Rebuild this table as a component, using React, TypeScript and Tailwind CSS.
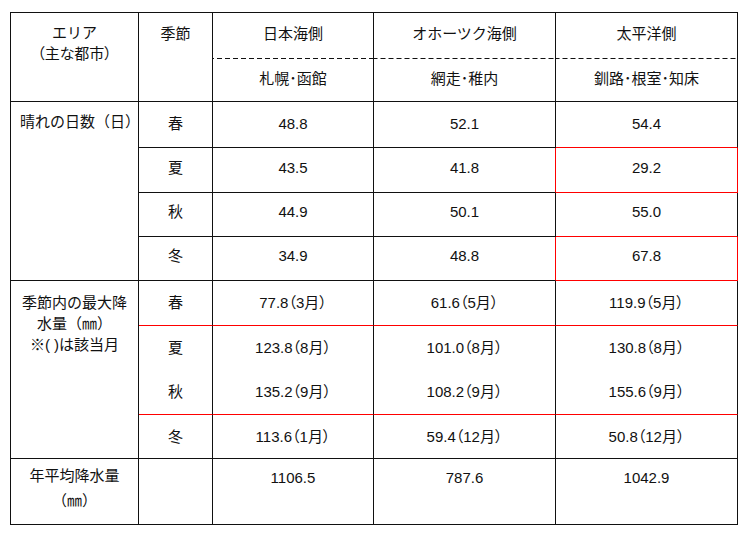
import React from "react";

type Edge = "k" | "red" | "none" | "dash";

// dashed rule under the region names (5px dash, 3px gap)
const dash =
  "bg-[linear-gradient(to_right,#111_5px,transparent_5px)] bg-[length:8px_1px] bg-repeat-x bg-bottom";

function Cell({
  children,
  r = "k",
  b = "k",
  className = "",
}: {
  children?: React.ReactNode;
  r?: Edge;
  b?: Edge;
  className?: string;
}) {
  const right = r === "red" ? "border-r border-r-[#f00]" : "border-r border-r-[#111]";
  const bottom =
    b === "red" ? "border-b border-b-[#f00]" : b === "k" ? "border-b border-b-[#111]" : b === "dash" ? dash : "";
  return <div className={`${right} ${bottom} text-center ${className}`}>{children}</div>;
}

const mid = "flex items-center justify-center";

const sunny = [
  { season: "春", v: ["48.8", "52.1", "54.4"], pad: "pb-[2px]" },
  { season: "夏", v: ["43.5", "41.8", "29.2"], pad: "pb-[4px]" },
  { season: "秋", v: ["44.9", "50.1", "55.0"], pad: "pb-[5px]" },
  { season: "冬", v: ["34.9", "48.8", "67.8"], pad: "pb-[5px]" },
];

const rain: { season: string; v: string[]; b: Edge }[] = [
  { season: "春", v: ["77.8（3月）", "61.6（5月）", "119.9（5月）"], b: "red" },
  { season: "夏", v: ["123.8（8月）", "101.0（8月）", "130.8（8月）"], b: "none" },
  { season: "秋", v: ["135.2（9月）", "108.2（9月）", "155.6（9月）"], b: "red" },
  { season: "冬", v: ["113.6（1月）", "59.4（12月）", "50.8（12月）"], b: "k" },
];

export default function App() {
  return (
    <div className="min-h-screen bg-white pt-[12px] pl-[10px] font-['Liberation_Sans','Noto_Sans_CJK_JP',sans-serif] text-[15px] leading-[20px] text-[#111]">
      <div className="grid w-[728px] grid-cols-[128px_74px_161px_182px_182px] grid-rows-[46px_43px_46px_45px_44px_44px_45px_44px_45px_44px_66px] border-l border-t border-[#111]">
        {/* header */}
        <Cell className="row-span-2 pt-[9px] leading-[21px]">
          <div>エリア</div>
          <div className="[font-feature-settings:'palt']">（主な都市）</div>
        </Cell>
        <Cell className="row-span-2 pt-[10px] leading-[21px]">季節</Cell>
        <Cell b="dash" className="pt-[10px] leading-[21px]">日本海側</Cell>
        <Cell b="dash" className="pt-[10px] leading-[21px]">オホーツク海側</Cell>
        <Cell b="dash" className="pt-[10px] leading-[21px]">太平洋側</Cell>
        <Cell className={`${mid} pb-[2px]`}>札幌･函館</Cell>
        <Cell className={`${mid} pb-[2px]`}>網走･稚内</Cell>
        <Cell className={`${mid} pb-[2px]`}>釧路･根室･知床</Cell>

        {/* days of fine weather */}
        <Cell className="row-span-4 pt-[10px] pl-[9px] text-left">晴れの日数（日）</Cell>
        {sunny.map((r) => {
          const boxed = r.season === "夏" || r.season === "冬";
          const above = r.season === "春" || r.season === "秋";
          return (
            <React.Fragment key={r.season}>
              <Cell className={`${mid} ${r.pad}`}>{r.season}</Cell>
              <Cell className={`${mid} ${r.pad}`}>{r.v[0]}</Cell>
              <Cell r={boxed ? "red" : "k"} className={`${mid} ${r.pad}`}>
                {r.v[1]}
              </Cell>
              <Cell r={boxed ? "red" : "k"} b={boxed || above ? "red" : "k"} className={`${mid} ${r.pad}`}>
                {r.v[2]}
              </Cell>
            </React.Fragment>
          );
        })}

        {/* maximum seasonal rainfall */}
        <Cell className="row-span-4 pt-[11px] leading-[21px]">
          季節内の最大降
          <br />
          水量（㎜）
          <br />
          ※( )は該当月
        </Cell>
        {rain.map((r) => (
          <React.Fragment key={r.season}>
            <Cell b={r.b} className={mid}>
              {r.season}
            </Cell>
            {r.v.map((v) => (
              <Cell key={v} b={r.b} className={`${mid} [font-feature-settings:'palt']`}>
                {v}
              </Cell>
            ))}
          </React.Fragment>
        ))}

        {/* annual mean */}
        <Cell className="pt-[4px] leading-[25px]">
          年平均降水量
          <br />
          （㎜）
        </Cell>
        <Cell />
        <Cell className="pt-[9px]">1106.5</Cell>
        <Cell className="pt-[9px]">787.6</Cell>
        <Cell className="pt-[9px]">1042.9</Cell>
      </div>
    </div>
  );
}
